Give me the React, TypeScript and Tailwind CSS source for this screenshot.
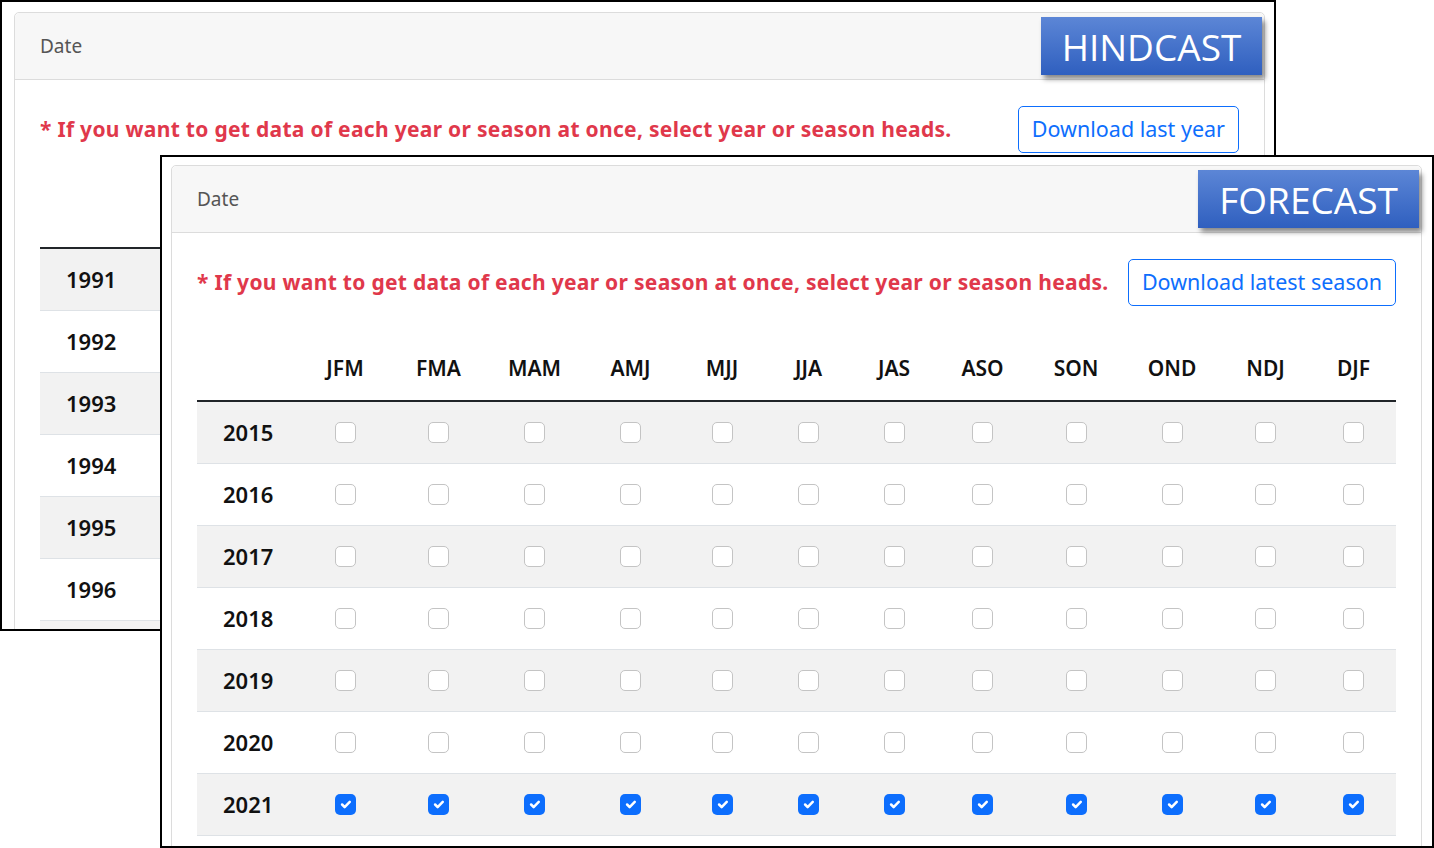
import React from "react";

const SEASONS = ["JFM", "FMA", "MAM", "AMJ", "MJJ", "JJA", "JAS", "ASO", "SON", "OND", "NDJ", "DJF"];
const FONT = { fontFamily: "'Noto Sans', Lato, sans-serif" };

function Box({ checked }: { checked?: boolean }) {
  if (checked) {
    return (
      <span className="flex h-[21px] w-[21px] items-center justify-center rounded-[5px] bg-[#0d6efd]">
        <svg viewBox="0 0 20 20" className="h-[17px] w-[17px]" fill="none">
          <path d="m6 10 3 3 6-6" stroke="#fff" strokeWidth="3" strokeLinecap="round" strokeLinejoin="round" />
        </svg>
      </span>
    );
  }
  return <span className="block h-[21px] w-[21px] rounded-[5px] border-[1.5px] border-[#c4c4c4] bg-white" />;
}

function Badge({ label }: { label: string }) {
  return (
    <div
      className="absolute right-[2px] top-[4px] flex h-[58px] w-[221px] items-center justify-center bg-linear-to-b from-[#5c86d6] to-[#2f5fbf] text-[37px] leading-none text-white shadow-[3px_4px_5px_rgba(0,0,0,0.45)]"
      style={{ fontFamily: "'Open Sans', 'Noto Sans', sans-serif" }}
    >
      {label}
    </div>
  );
}

function DateCard({ badge, button, years, checkedYear }: { badge: string; button: string; years: number[]; checkedYear?: number }) {
  return (
    <div className="relative w-[1251px] rounded-[5px] border border-[#dcdcdc] bg-white" style={FONT}>
      <div className="flex h-[67px] items-center rounded-t-[5px] border-b border-[#dcdcdc] bg-[#f7f7f7] px-[25px] text-[19px] text-[#555]">
        Date
      </div>
      <Badge label={badge} />
      <div className="px-[25px] pb-[40px] pt-[26px]">
        <div className="flex items-center justify-between">
          <p className="text-[21px] font-bold tracking-[0.3px] text-[#e0384b]">
            * If you want to get data of each year or season at once, select year or season heads.
          </p>
          <button className="h-[47px] rounded-[5px] border border-[#0d6efd] px-[13px] text-[21.5px] text-[#0d6efd]">
            {button}
          </button>
        </div>
        <div className="grid grid-cols-[102px_92px_95px_97px_95px_88px_85px_86px_91px_96px_96px_91px_85px]">
          <div className="h-[96px] border-b-2 border-[#212529]" />
          {SEASONS.map((s) => (
            <div key={s} className="flex h-[96px] items-end justify-center border-b-2 border-[#212529] pb-[16px] text-[21px] font-semibold text-[#111]">
              {s}
            </div>
          ))}
          {years.map((y, i) => {
            const bg = i % 2 === 0 ? "bg-[#f2f2f2]" : "bg-white";
            return (
              <React.Fragment key={y}>
                <div className={`flex h-[62px] items-center border-b border-[#dee2e6] pl-[26px] text-[22px] font-semibold text-[#111] ${bg}`}>
                  {y}
                </div>
                {SEASONS.map((s) => (
                  <div key={s} className={`flex h-[62px] items-center justify-center border-b border-[#dee2e6] ${bg}`}>
                    <Box checked={y === checkedYear} />
                  </div>
                ))}
              </React.Fragment>
            );
          })}
        </div>
      </div>
    </div>
  );
}

export default function App() {
  return (
    <div className="relative h-[848px] w-[1434px] overflow-hidden bg-white">
      <div className="absolute left-0 top-0 h-[631px] w-[1276px] overflow-hidden border-2 border-black bg-white pl-[12px] pt-[10px]">
        <DateCard badge="HINDCAST" button="Download last year" years={[1991, 1992, 1993, 1994, 1995, 1996, 1997]} />
      </div>
      <div className="absolute left-[160px] top-[155px] h-[693px] w-[1274px] overflow-hidden border-2 border-black bg-white pl-[9px] pt-[8px]">
        <DateCard
          badge="FORECAST"
          button="Download latest season"
          years={[2015, 2016, 2017, 2018, 2019, 2020, 2021]}
          checkedYear={2021}
        />
      </div>
    </div>
  );
}
